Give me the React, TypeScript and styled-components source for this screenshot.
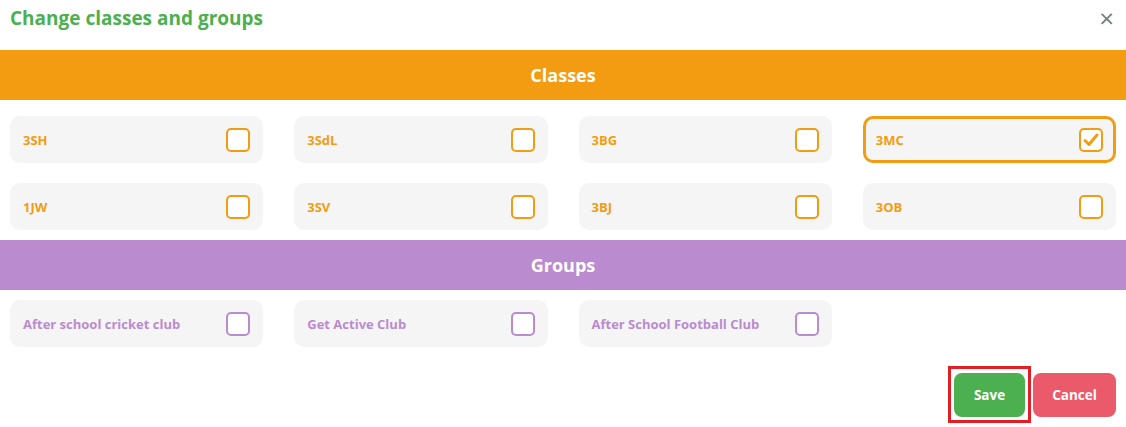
import React, { useState } from 'react'
import styled, { createGlobalStyle } from 'styled-components'

const GlobalStyle = createGlobalStyle`
  body {
    margin: 0;
    background: #ffffff;
    font-family: "Open Sans", "Liberation Sans", sans-serif;
  }
`

const ORANGE = '#f39c12'
const PURPLE = '#bb8bcf'

const Modal = styled.div`
  width: 1126px;
  background: #fff;
  display: flex;
  flex-direction: column;
`

const Header = styled.div`
  display: flex;
  justify-content: space-between;
  align-items: center;
  height: 50px;
  flex-shrink: 0;
  padding: 0 10px 14px 10px;
  box-sizing: border-box;
`

const Title = styled.h2`
  margin: 0;
  font-size: 19px;
  font-weight: 700;
  color: #4caf50;
`

const Close = styled.button`
  border: none;
  background: none;
  color: #777;
  font-size: 20px;
  line-height: 1;
  padding: 0;
  margin-right: 1px;
  cursor: pointer;
  font-family: "DejaVu Sans", sans-serif;
`

const SectionBar = styled.div<{ $color: string }>`
  height: 50px;
  flex-shrink: 0;
  background: ${p => p.$color};
  color: #fff;
  font-size: 18px;
  font-weight: 700;
  display: flex;
  align-items: center;
  justify-content: center;
`

const Grid = styled.div<{ $top: number }>`
  display: grid;
  grid-template-columns: repeat(4, 1fr);
  column-gap: 31px;
  row-gap: 20px;
  padding: ${p => p.$top}px 10px 10px;
`

const Card = styled.label<{ $color: string; $checked: boolean }>`
  height: 47px;
  box-sizing: border-box;
  background: #f5f5f5;
  border-radius: 10px;
  border: 3px solid ${p => (p.$checked ? p.$color : 'transparent')};
  display: flex;
  align-items: center;
  justify-content: space-between;
  padding: 0 10px;
  color: ${p => p.$color};
  font-size: 13px;
  font-weight: 700;
  cursor: pointer;
`

const Box = styled.span<{ $color: string }>`
  width: 24px;
  height: 24px;
  box-sizing: border-box;
  border: 2px solid ${p => p.$color};
  border-radius: 5px;
  background: #fff;
  display: flex;
  align-items: center;
  justify-content: center;
`

const Footer = styled.div`
  display: flex;
  justify-content: flex-end;
  align-items: center;
  gap: 2px;
  padding: 9px 10px 0;
`

const Highlight = styled.div`
  border: 3px solid #e31e24;
  padding: 3.5px 3px;
  display: flex;
`

const Button = styled.button<{ $bg: string }>`
  height: 44px;
  border: none;
  border-radius: 8px;
  background: ${p => p.$bg};
  color: #fff;
  font-family: "Open Sans", "Liberation Sans", sans-serif;
  font-size: 13.5px;
  font-weight: 700;
  padding: 0 12px;
  width: 71px;
  cursor: pointer;
`

const CancelButton = styled(Button)`
  width: 83px;
`

const classes = ['3SH', '3SdL', '3BG', '3MC', '1JW', '3SV', '3BJ', '3OB']
const groups = ['After school cricket club', 'Get Active Club', 'After School Football Club']

const Option = ({ label, color, checked, onToggle }: { label: string; color: string; checked: boolean; onToggle: () => void }) => (
  <Card $color={color} $checked={checked} onClick={onToggle}>
    {label}
    <Box $color={color}>
      {checked && (
        <svg width="18" height="18" viewBox="0 0 18 18">
          <polyline points="3,9.5 7,13.5 15,4" fill="none" stroke={color} strokeWidth="3" strokeLinecap="round" strokeLinejoin="round" />
        </svg>
      )}
    </Box>
  </Card>
)

const App: React.FC = () => {
  const [selected, setSelected] = useState<string[]>(['3MC'])
  const toggle = (k: string) =>
    setSelected(s => (s.includes(k) ? s.filter(x => x !== k) : [...s, k]))

  return (
    <>
      <GlobalStyle />
      <Modal>
        <Header>
          <Title>Change classes and groups</Title>
          <Close>×</Close>
        </Header>
        <SectionBar $color={ORANGE}>Classes</SectionBar>
        <Grid $top={16}>
          {classes.map(c => (
            <Option key={c} label={c} color={ORANGE} checked={selected.includes(c)} onToggle={() => toggle(c)} />
          ))}
        </Grid>
        <SectionBar $color={PURPLE}>Groups</SectionBar>
        <Grid $top={10}>
          {groups.map(g => (
            <Option key={g} label={g} color={PURPLE} checked={selected.includes(g)} onToggle={() => toggle(g)} />
          ))}
        </Grid>
        <Footer>
          <Highlight>
            <Button $bg="#4caf50">Save</Button>
          </Highlight>
          <CancelButton $bg="#ea5a6a">Cancel</CancelButton>
        </Footer>
      </Modal>
    </>
  )
}

export default App
